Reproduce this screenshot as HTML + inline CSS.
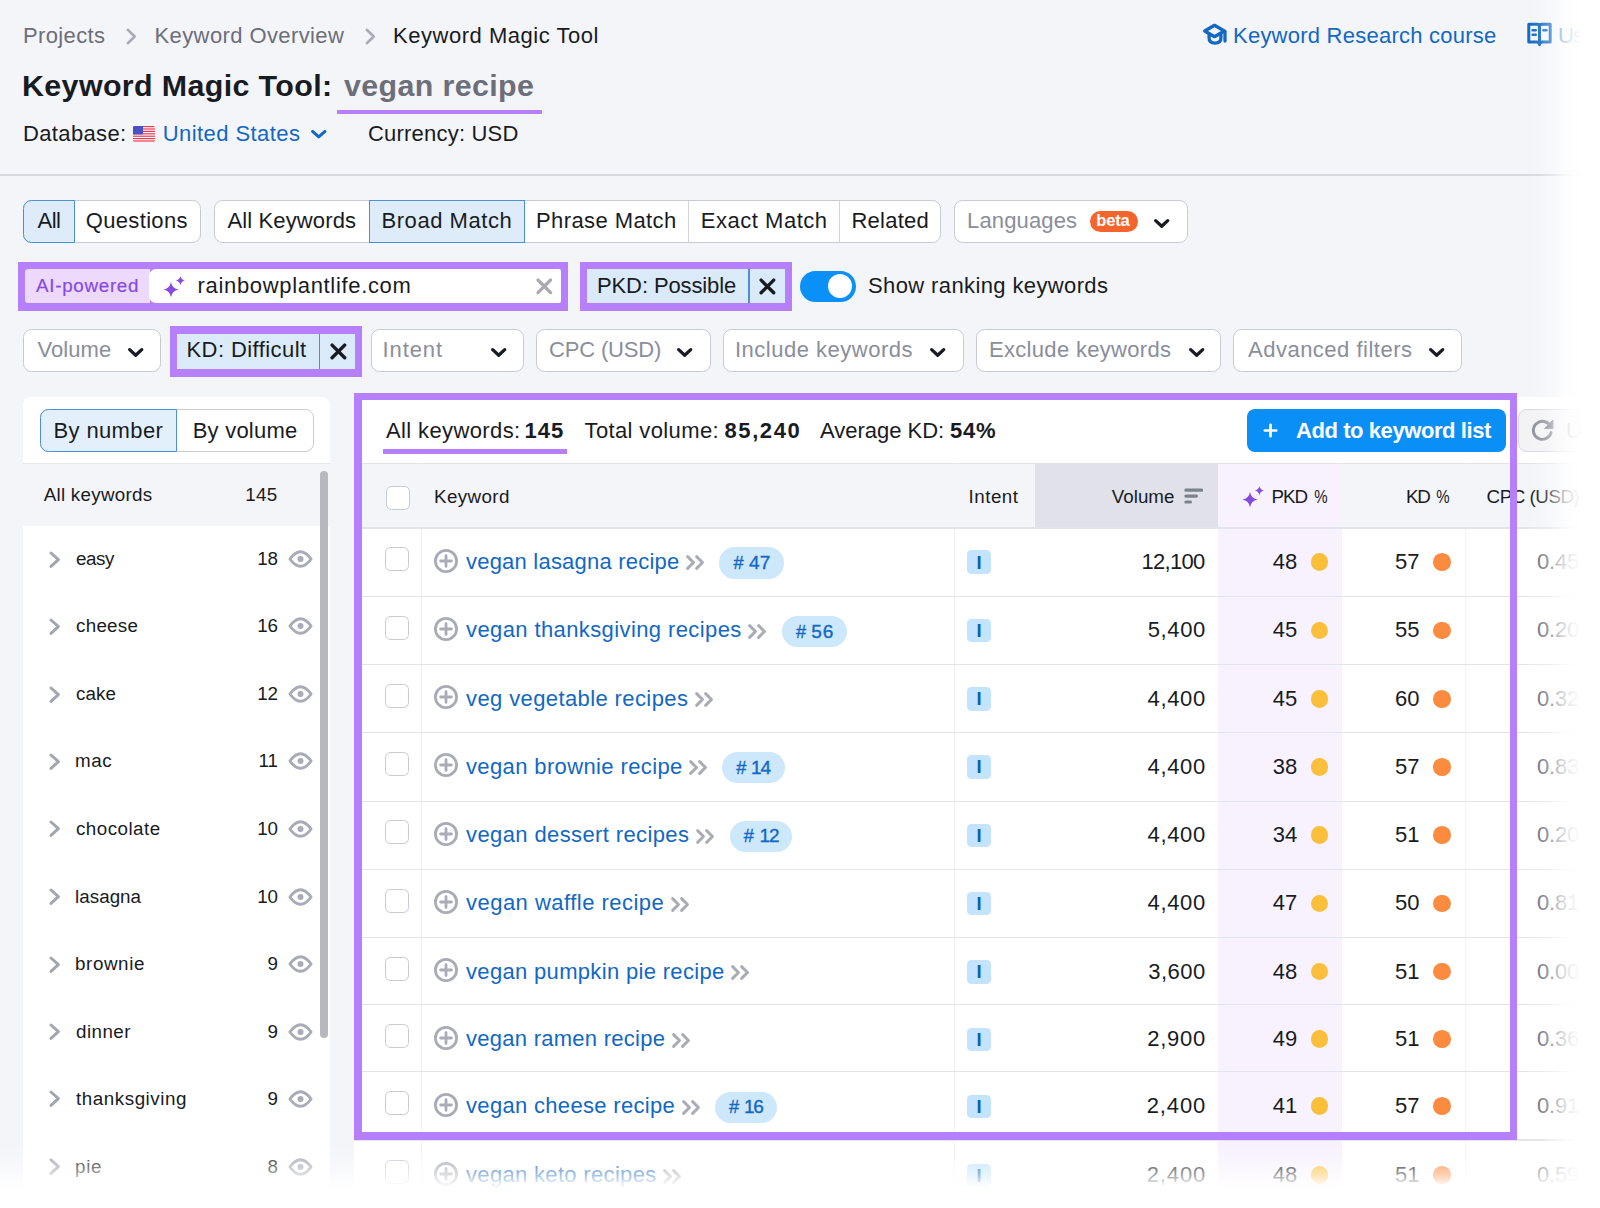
<!DOCTYPE html><html lang="en"><head><meta charset="utf-8"><title>Keyword Magic Tool</title><style>
html,body{margin:0;padding:0;background:#fff}#page{width:1600px;height:1208px;overflow:hidden;position:relative;background:#f4f5f9;font-family:"Liberation Sans", sans-serif;color:#191b23}
.b{position:absolute;display:block}.t{position:absolute;white-space:pre;line-height:30px;height:30px}
</style></head><body><div id="page">
<span class="t" style="left:23.00px;top:20.5px;font-size:22px;color:#6c6e79;letter-spacing:0.361px;">Projects</span>
<svg class="b" style="left:125.44999999999999px;top:26.799999999999997px;" width="12.5" height="19" viewBox="0 0 12.5 19"><path d="M2.8 2.8 L9.7 9.5 L2.8 16.2" fill="none" stroke="#a9abb6" stroke-width="2.6" stroke-linecap="round" stroke-linejoin="round"/></svg>
<span class="t" style="left:154.50px;top:20.5px;font-size:22px;color:#6c6e79;letter-spacing:0.400px;">Keyword Overview</span>
<svg class="b" style="left:364.25px;top:26.799999999999997px;" width="12.5" height="19" viewBox="0 0 12.5 19"><path d="M2.8 2.8 L9.7 9.5 L2.8 16.2" fill="none" stroke="#a9abb6" stroke-width="2.6" stroke-linecap="round" stroke-linejoin="round"/></svg>
<span class="t" style="left:393.00px;top:20.5px;font-size:22px;color:#191b23;letter-spacing:0.531px;">Keyword Magic Tool</span>
<svg class="b" style="left:1202px;top:23.2px;" width="26" height="24" viewBox="0 0 26 24"><path d="M12.5 2.3 L2.7 8 L12.5 13.7 L22.3 8 Z" fill="none" stroke="#1268c3" stroke-width="3.3" stroke-linejoin="round"/><path d="M7.1 11.2 V15 Q7.1 20.1 13 20.1 Q18.9 20.1 18.9 15 V11.2" fill="none" stroke="#1268c3" stroke-width="3.3" stroke-linejoin="round" stroke-linecap="round"/><path d="M23 8.3 V18" stroke="#1268c3" stroke-width="3.3" stroke-linecap="round"/></svg>
<span class="t" style="left:1233.00px;top:20.5px;font-size:22px;color:#1268c3;letter-spacing:0.238px;">Keyword Research course</span>
<svg class="b" style="left:1527px;top:21.7px;" width="26" height="26" viewBox="0 0 26 26"><path d="M1.8 2.2 H10 Q12.5 2.2 12.5 4.4 Q12.5 2.2 15 2.2 H23.2 V20 H15 Q12.5 20 12.5 22.6 Q12.5 20 10 20 H1.8 Z" fill="none" stroke="#1268c3" stroke-width="3" stroke-linejoin="round"/><path d="M12.5 3.5 V22" stroke="#1268c3" stroke-width="3"/><path d="M5.6 8.2 h3.2 M5.6 12.8 h3.2 M16.4 8.2 h3.2" stroke="#1268c3" stroke-width="2.4" stroke-linecap="round"/><path d="M10 21 L12.5 24.6 L15 21 Z" fill="#1268c3"/></svg>
<span class="t" style="left:1558.00px;top:20.5px;font-size:22px;color:#1268c3;letter-spacing:-0.983px;">User manual</span>
<span class="t" style="left:22.00px;top:70.4px;font-size:30.4px;color:#191b23;font-weight:700;letter-spacing:0.376px;">Keyword Magic Tool:</span>
<span class="t" style="left:344.00px;top:70.4px;font-size:30.4px;color:#6c6e79;font-weight:700;letter-spacing:0.371px;">vegan recipe</span>
<div class="b" style="left:337px;top:109.6px;width:205px;height:4.7px;background:#b67ffb;"></div>
<span class="t" style="left:23.00px;top:119.0px;font-size:22px;color:#191b23;letter-spacing:0.353px;">Database:</span>
<svg class="b" style="left:133.3px;top:126.2px;border-radius:1.5px;" width="22" height="15.6" viewBox="0 0 22 15.6"><rect width="22" height="15.6" fill="#fff"/><rect y="0.00" width="22" height="1.2" fill="#e8384f"/><rect y="2.40" width="22" height="1.2" fill="#e8384f"/><rect y="4.80" width="22" height="1.2" fill="#e8384f"/><rect y="7.20" width="22" height="1.2" fill="#e8384f"/><rect y="9.60" width="22" height="1.2" fill="#e8384f"/><rect y="12.00" width="22" height="1.2" fill="#e8384f"/><rect y="14.40" width="22" height="1.2" fill="#e8384f"/><rect width="10" height="8.4" fill="#4a4fc4"/></svg>
<span class="t" style="left:162.70px;top:119.0px;font-size:22px;color:#1268c3;letter-spacing:0.435px;">United States</span>
<svg class="b" style="left:308.95px;top:128.0px;" width="19.5" height="12.8" viewBox="0 0 19.5 12.8"><path d="M3.50 3.50 L9.75 9.00 L16.00 3.50" fill="none" stroke="#1268c3" stroke-width="3" stroke-linecap="round" stroke-linejoin="round"/></svg>
<span class="t" style="left:368.00px;top:119.0px;font-size:22px;color:#191b23;letter-spacing:0.206px;">Currency: USD</span>
<div class="b" style="left:0px;top:174px;width:1600px;height:1.5px;background:#d7d9df;"></div>
<div class="b" style="left:23px;top:200.45px;width:178px;height:42.4px;background:#fff;border:1.5px solid #c8cad2;border-radius:8.5px;box-sizing:border-box;"></div>
<div class="b" style="left:23px;top:200.45px;width:52px;height:42.4px;background:#deebf8;border:1.5px solid #4a90d6;border-radius:8.5px 0 0 8.5px;box-sizing:border-box;"></div>
<span class="t" style="left:37.50px;top:206.1px;font-size:22px;color:#191b23;letter-spacing:-0.531px;">All</span>
<span class="t" style="left:85.80px;top:206.1px;font-size:22px;color:#191b23;letter-spacing:0.331px;">Questions</span>
<div class="b" style="left:214px;top:200.45px;width:727px;height:42.4px;background:#fff;border:1.5px solid #c8cad2;border-radius:8.5px;box-sizing:border-box;"></div>
<span class="t" style="left:227.50px;top:206.1px;font-size:22px;color:#191b23;letter-spacing:0.122px;">All Keywords</span>
<div class="b" style="left:369px;top:200.45px;width:156px;height:42.4px;background:#deebf8;border:1.5px solid #4a90d6;border-radius:0;box-sizing:border-box;"></div>
<span class="t" style="left:381.50px;top:206.1px;font-size:22px;color:#191b23;letter-spacing:0.551px;">Broad Match</span>
<div class="b" style="left:687.5px;top:201.45px;width:1.2px;height:40.4px;background:#d3d5dc;"></div>
<span class="t" style="left:536.00px;top:206.1px;font-size:22px;color:#191b23;letter-spacing:0.410px;">Phrase Match</span>
<div class="b" style="left:838.5px;top:201.45px;width:1.2px;height:40.4px;background:#d3d5dc;"></div>
<span class="t" style="left:700.80px;top:206.1px;font-size:22px;color:#191b23;letter-spacing:0.519px;">Exact Match</span>
<span class="t" style="left:851.50px;top:206.1px;font-size:22px;color:#191b23;letter-spacing:0.234px;">Related</span>
<div class="b" style="left:954px;top:200.45px;width:233.5px;height:42.4px;background:#fff;border:1.5px solid #c8cad2;border-radius:8.5px;box-sizing:border-box;"></div>
<span class="t" style="left:967.00px;top:205.9px;font-size:22px;color:#8a8e9b;letter-spacing:0.140px;">Languages</span>
<svg class="b" style="left:1152.3px;top:216.54999999999998px;" width="19.4" height="13.2" viewBox="0 0 19.4 13.2"><path d="M3.65 3.65 L9.70 9.22 L15.75 3.65" fill="none" stroke="#191b23" stroke-width="3.3" stroke-linecap="round" stroke-linejoin="round"/></svg>
<div class="b" style="left:1090px;top:210.7px;width:47.5px;height:21.2px;background:#f5642d;border-radius:10.6px;"></div>
<span class="t" style="left:1096.20px;top:206.1px;font-size:16.6px;color:#fff;font-weight:700;letter-spacing:-0.197px;">beta</span>
<div class="b" style="left:18px;top:262px;width:550.2px;height:48.5px;background:#b67ffb;"></div>
<div class="b" style="left:25px;top:268.7px;width:124.5px;height:34.6px;background:#ecd9fc;border-radius:3px 0 0 3px;"></div>
<span class="t" style="left:36.00px;top:270.8px;font-size:18.8px;color:#8649e1;letter-spacing:0.711px;-webkit-text-stroke:0.2px #8649e1;">AI-powered</span>
<div class="b" style="left:149px;top:268.7px;width:412.3px;height:34.6px;background:#fff;border-radius:7px 2px 2px 7px;"></div>
<svg class="b" style="left:162.6px;top:275.5px;" width="23.0" height="22.0" viewBox="0 0 23 22"><path d="M8 6.0 Q9.14 12.459999999999999 15.6 13.6 Q9.14 14.74 8 21.2 Q6.86 14.74 0.40000000000000036 13.6 Q6.86 12.459999999999999 8 6.0 Z M17.4 0.0 Q18.182 3.8179999999999996 22.0 4.6 Q18.182 5.382 17.4 9.2 Q16.618 5.382 12.799999999999999 4.6 Q16.618 3.8179999999999996 17.4 0.0 Z" fill="#8649e1"/></svg>
<span class="t" style="left:197.50px;top:271.0px;font-size:22px;color:#191b23;letter-spacing:0.673px;">rainbowplantlife.com</span>
<svg class="b" style="left:534.7px;top:277.2px;" width="18.6" height="18.6" viewBox="0 0 18.6 18.6"><path d="M3.0 3.0 L15.600000000000001 15.600000000000001 M15.600000000000001 3.0 L3.0 15.600000000000001" fill="none" stroke="#a8a9b1" stroke-width="3.2" stroke-linecap="round"/></svg>
<div class="b" style="left:580px;top:262px;width:212px;height:48.5px;background:#b67ffb;"></div>
<div class="b" style="left:587px;top:268.7px;width:198px;height:34.6px;background:#dbeaf8;"></div>
<div class="b" style="left:748.3px;top:268.7px;width:1.4px;height:34.6px;background:#4a90d6;"></div>
<span class="t" style="left:597.00px;top:271.0px;font-size:22px;color:#191b23;letter-spacing:-0.115px;">PKD: Possible</span>
<svg class="b" style="left:758.3000000000001px;top:277.1px;" width="18.8" height="18.8" viewBox="0 0 18.8 18.8"><path d="M3.1 3.1 L15.700000000000001 15.700000000000001 M15.700000000000001 3.1 L3.1 15.700000000000001" fill="none" stroke="#191b23" stroke-width="3.4" stroke-linecap="round"/></svg>
<div class="b" style="left:800px;top:271.2px;width:55.6px;height:30.8px;background:#0a90f6;border-radius:15.4px;"></div>
<div class="b" style="left:827.9px;top:273.9px;width:24.6px;height:24.6px;background:#fff;border-radius:12.3px;"></div>
<span class="t" style="left:868.00px;top:271.0px;font-size:22px;color:#191b23;letter-spacing:0.383px;">Show ranking keywords</span>
<div class="b" style="left:23px;top:329.1px;width:138px;height:43.2px;background:#fff;border:1.5px solid #c8cad2;border-radius:8.5px;box-sizing:border-box;"></div>
<span class="t" style="left:37.50px;top:335.0px;font-size:22px;color:#8a8e9b;letter-spacing:0.071px;">Volume</span>
<svg class="b" style="left:125.8px;top:345.6px;" width="19.4" height="13.2" viewBox="0 0 19.4 13.2"><path d="M3.65 3.65 L9.70 9.22 L15.75 3.65" fill="none" stroke="#191b23" stroke-width="3.3" stroke-linecap="round" stroke-linejoin="round"/></svg>
<div class="b" style="left:169.5px;top:326px;width:192.5px;height:50.5px;background:#b67ffb;"></div>
<div class="b" style="left:176.5px;top:333.6px;width:178px;height:35.2px;background:#dbeaf8;"></div>
<div class="b" style="left:318.5px;top:333.6px;width:1.4px;height:35.2px;background:#4a90d6;"></div>
<span class="t" style="left:186.50px;top:335.0px;font-size:22px;color:#191b23;letter-spacing:0.425px;">KD: Difficult</span>
<svg class="b" style="left:329.1px;top:341.6px;" width="18.8" height="18.8" viewBox="0 0 18.8 18.8"><path d="M3.1 3.1 L15.700000000000001 15.700000000000001 M15.700000000000001 3.1 L3.1 15.700000000000001" fill="none" stroke="#191b23" stroke-width="3.4" stroke-linecap="round"/></svg>
<div class="b" style="left:371px;top:329.1px;width:153px;height:43.2px;background:#fff;border:1.5px solid #c8cad2;border-radius:8.5px;box-sizing:border-box;"></div>
<span class="t" style="left:382.50px;top:335.0px;font-size:22px;color:#8a8e9b;letter-spacing:0.914px;">Intent</span>
<svg class="b" style="left:488.8px;top:345.6px;" width="19.4" height="13.2" viewBox="0 0 19.4 13.2"><path d="M3.65 3.65 L9.70 9.22 L15.75 3.65" fill="none" stroke="#191b23" stroke-width="3.3" stroke-linecap="round" stroke-linejoin="round"/></svg>
<div class="b" style="left:536px;top:329.1px;width:175px;height:43.2px;background:#fff;border:1.5px solid #c8cad2;border-radius:8.5px;box-sizing:border-box;"></div>
<span class="t" style="left:549.00px;top:335.0px;font-size:22px;color:#8a8e9b;letter-spacing:-0.167px;">CPC (USD)</span>
<svg class="b" style="left:675.3px;top:345.6px;" width="19.4" height="13.2" viewBox="0 0 19.4 13.2"><path d="M3.65 3.65 L9.70 9.22 L15.75 3.65" fill="none" stroke="#191b23" stroke-width="3.3" stroke-linecap="round" stroke-linejoin="round"/></svg>
<div class="b" style="left:723px;top:329.1px;width:241px;height:43.2px;background:#fff;border:1.5px solid #c8cad2;border-radius:8.5px;box-sizing:border-box;"></div>
<span class="t" style="left:735.00px;top:335.0px;font-size:22px;color:#8a8e9b;letter-spacing:0.502px;">Include keywords</span>
<svg class="b" style="left:928.3px;top:345.6px;" width="19.4" height="13.2" viewBox="0 0 19.4 13.2"><path d="M3.65 3.65 L9.70 9.22 L15.75 3.65" fill="none" stroke="#191b23" stroke-width="3.3" stroke-linecap="round" stroke-linejoin="round"/></svg>
<div class="b" style="left:976px;top:329.1px;width:245px;height:43.2px;background:#fff;border:1.5px solid #c8cad2;border-radius:8.5px;box-sizing:border-box;"></div>
<span class="t" style="left:989.00px;top:335.0px;font-size:22px;color:#8a8e9b;letter-spacing:0.313px;">Exclude keywords</span>
<svg class="b" style="left:1186.8px;top:345.6px;" width="19.4" height="13.2" viewBox="0 0 19.4 13.2"><path d="M3.65 3.65 L9.70 9.22 L15.75 3.65" fill="none" stroke="#191b23" stroke-width="3.3" stroke-linecap="round" stroke-linejoin="round"/></svg>
<div class="b" style="left:1233px;top:329.1px;width:229px;height:43.2px;background:#fff;border:1.5px solid #c8cad2;border-radius:8.5px;box-sizing:border-box;"></div>
<span class="t" style="left:1248.00px;top:335.0px;font-size:22px;color:#8a8e9b;letter-spacing:0.498px;">Advanced filters</span>
<svg class="b" style="left:1427.3px;top:345.6px;" width="19.4" height="13.2" viewBox="0 0 19.4 13.2"><path d="M3.65 3.65 L9.70 9.22 L15.75 3.65" fill="none" stroke="#191b23" stroke-width="3.3" stroke-linecap="round" stroke-linejoin="round"/></svg>
<div class="b" style="left:23px;top:397px;width:307px;height:900px;background:#fff;border-radius:8px 8px 0 0;"></div>
<div class="b" style="left:40px;top:408.7px;width:274px;height:43.2px;background:#fff;border:1.5px solid #c8cad2;border-radius:8.5px;box-sizing:border-box;"></div>
<div class="b" style="left:40px;top:408.7px;width:137.3px;height:43.2px;background:#e3f0fc;border:1.5px solid #4a90d6;border-radius:8.5px 0 0 8.5px;box-sizing:border-box;"></div>
<span class="t" style="left:53.50px;top:415.7px;font-size:22px;color:#191b23;letter-spacing:0.368px;">By number</span>
<span class="t" style="left:192.70px;top:415.7px;font-size:22px;color:#191b23;letter-spacing:0.229px;">By volume</span>
<div class="b" style="left:23px;top:463px;width:307px;height:62.5px;background:#f4f5f9;"></div>
<div class="b" style="left:23px;top:462.5px;width:307px;height:1.2px;background:#e6e7ec;"></div>
<span class="t" style="left:43.70px;top:479.7px;font-size:18.8px;color:#191b23;letter-spacing:0.270px;">All keywords</span>
<span class="t" style="left:245.30px;top:479.7px;font-size:18.8px;color:#191b23;letter-spacing:0.305px;">145</span>
<div class="b" style="left:320px;top:470.5px;width:8.2px;height:567px;background:#b7b8be;border-radius:4.1px;"></div>
<svg class="b" style="left:48.0px;top:549.8px;" width="13.4" height="19.4" viewBox="0 0 13.4 19.4"><path d="M3.0 3.0 L10.4 9.7 L3.0 16.4" fill="none" stroke="#a3a5b0" stroke-width="3" stroke-linecap="round" stroke-linejoin="round"/></svg>
<span class="t" style="left:76.00px;top:544.2px;font-size:18.8px;color:#191b23;letter-spacing:-0.427px;">easy</span>
<span class="t" style="left:257.15px;top:544.2px;font-size:18.8px;color:#191b23;">18</span>
<svg class="b" style="left:287px;top:548.2px;" width="27" height="22" viewBox="0 0 27 22"><path d="M2.9 11 Q13.5 -3.6 24.1 11 Q13.5 25.6 2.9 11 Z" fill="none" stroke="#a9abb6" stroke-width="2.9" stroke-linejoin="round"/><circle cx="13.5" cy="11" r="3" fill="#a9abb6"/></svg>
<svg class="b" style="left:48.0px;top:616.5px;" width="13.4" height="19.4" viewBox="0 0 13.4 19.4"><path d="M3.0 3.0 L10.4 9.7 L3.0 16.4" fill="none" stroke="#a3a5b0" stroke-width="3" stroke-linecap="round" stroke-linejoin="round"/></svg>
<span class="t" style="left:76.00px;top:610.9px;font-size:18.8px;color:#191b23;letter-spacing:0.277px;">cheese</span>
<span class="t" style="left:257.15px;top:610.9px;font-size:18.8px;color:#191b23;">16</span>
<svg class="b" style="left:287px;top:614.9000000000001px;" width="27" height="22" viewBox="0 0 27 22"><path d="M2.9 11 Q13.5 -3.6 24.1 11 Q13.5 25.6 2.9 11 Z" fill="none" stroke="#a9abb6" stroke-width="2.9" stroke-linejoin="round"/><circle cx="13.5" cy="11" r="3" fill="#a9abb6"/></svg>
<svg class="b" style="left:48.0px;top:684.5px;" width="13.4" height="19.4" viewBox="0 0 13.4 19.4"><path d="M3.0 3.0 L10.4 9.7 L3.0 16.4" fill="none" stroke="#a3a5b0" stroke-width="3" stroke-linecap="round" stroke-linejoin="round"/></svg>
<span class="t" style="left:76.00px;top:678.9px;font-size:18.8px;color:#191b23;letter-spacing:0.058px;">cake</span>
<span class="t" style="left:257.15px;top:678.9px;font-size:18.8px;color:#191b23;">12</span>
<svg class="b" style="left:287px;top:682.9000000000001px;" width="27" height="22" viewBox="0 0 27 22"><path d="M2.9 11 Q13.5 -3.6 24.1 11 Q13.5 25.6 2.9 11 Z" fill="none" stroke="#a9abb6" stroke-width="2.9" stroke-linejoin="round"/><circle cx="13.5" cy="11" r="3" fill="#a9abb6"/></svg>
<svg class="b" style="left:48.0px;top:751.5999999999999px;" width="13.4" height="19.4" viewBox="0 0 13.4 19.4"><path d="M3.0 3.0 L10.4 9.7 L3.0 16.4" fill="none" stroke="#a3a5b0" stroke-width="3" stroke-linecap="round" stroke-linejoin="round"/></svg>
<span class="t" style="left:75.00px;top:746.0px;font-size:18.8px;color:#191b23;letter-spacing:0.555px;">mac</span>
<span class="t" style="left:258.55px;top:746.0px;font-size:18.8px;color:#191b23;">11</span>
<svg class="b" style="left:287px;top:750.0px;" width="27" height="22" viewBox="0 0 27 22"><path d="M2.9 11 Q13.5 -3.6 24.1 11 Q13.5 25.6 2.9 11 Z" fill="none" stroke="#a9abb6" stroke-width="2.9" stroke-linejoin="round"/><circle cx="13.5" cy="11" r="3" fill="#a9abb6"/></svg>
<svg class="b" style="left:48.0px;top:819.4px;" width="13.4" height="19.4" viewBox="0 0 13.4 19.4"><path d="M3.0 3.0 L10.4 9.7 L3.0 16.4" fill="none" stroke="#a3a5b0" stroke-width="3" stroke-linecap="round" stroke-linejoin="round"/></svg>
<span class="t" style="left:76.00px;top:813.8px;font-size:18.8px;color:#191b23;letter-spacing:0.468px;">chocolate</span>
<span class="t" style="left:257.15px;top:813.8px;font-size:18.8px;color:#191b23;">10</span>
<svg class="b" style="left:287px;top:817.8000000000001px;" width="27" height="22" viewBox="0 0 27 22"><path d="M2.9 11 Q13.5 -3.6 24.1 11 Q13.5 25.6 2.9 11 Z" fill="none" stroke="#a9abb6" stroke-width="2.9" stroke-linejoin="round"/><circle cx="13.5" cy="11" r="3" fill="#a9abb6"/></svg>
<svg class="b" style="left:48.0px;top:887.4px;" width="13.4" height="19.4" viewBox="0 0 13.4 19.4"><path d="M3.0 3.0 L10.4 9.7 L3.0 16.4" fill="none" stroke="#a3a5b0" stroke-width="3" stroke-linecap="round" stroke-linejoin="round"/></svg>
<span class="t" style="left:75.00px;top:881.8px;font-size:18.8px;color:#191b23;letter-spacing:0.043px;">lasagna</span>
<span class="t" style="left:257.15px;top:881.8px;font-size:18.8px;color:#191b23;">10</span>
<svg class="b" style="left:287px;top:885.8000000000001px;" width="27" height="22" viewBox="0 0 27 22"><path d="M2.9 11 Q13.5 -3.6 24.1 11 Q13.5 25.6 2.9 11 Z" fill="none" stroke="#a9abb6" stroke-width="2.9" stroke-linejoin="round"/><circle cx="13.5" cy="11" r="3" fill="#a9abb6"/></svg>
<svg class="b" style="left:48.0px;top:954.6999999999999px;" width="13.4" height="19.4" viewBox="0 0 13.4 19.4"><path d="M3.0 3.0 L10.4 9.7 L3.0 16.4" fill="none" stroke="#a3a5b0" stroke-width="3" stroke-linecap="round" stroke-linejoin="round"/></svg>
<span class="t" style="left:75.00px;top:949.1px;font-size:18.8px;color:#191b23;letter-spacing:0.596px;">brownie</span>
<span class="t" style="left:267.60px;top:949.1px;font-size:18.8px;color:#191b23;">9</span>
<svg class="b" style="left:287px;top:953.1px;" width="27" height="22" viewBox="0 0 27 22"><path d="M2.9 11 Q13.5 -3.6 24.1 11 Q13.5 25.6 2.9 11 Z" fill="none" stroke="#a9abb6" stroke-width="2.9" stroke-linejoin="round"/><circle cx="13.5" cy="11" r="3" fill="#a9abb6"/></svg>
<svg class="b" style="left:48.0px;top:1022.0999999999999px;" width="13.4" height="19.4" viewBox="0 0 13.4 19.4"><path d="M3.0 3.0 L10.4 9.7 L3.0 16.4" fill="none" stroke="#a3a5b0" stroke-width="3" stroke-linecap="round" stroke-linejoin="round"/></svg>
<span class="t" style="left:76.00px;top:1016.5px;font-size:18.8px;color:#191b23;letter-spacing:0.449px;">dinner</span>
<span class="t" style="left:267.60px;top:1016.5px;font-size:18.8px;color:#191b23;">9</span>
<svg class="b" style="left:287px;top:1020.5px;" width="27" height="22" viewBox="0 0 27 22"><path d="M2.9 11 Q13.5 -3.6 24.1 11 Q13.5 25.6 2.9 11 Z" fill="none" stroke="#a9abb6" stroke-width="2.9" stroke-linejoin="round"/><circle cx="13.5" cy="11" r="3" fill="#a9abb6"/></svg>
<svg class="b" style="left:48.0px;top:1089.2px;" width="13.4" height="19.4" viewBox="0 0 13.4 19.4"><path d="M3.0 3.0 L10.4 9.7 L3.0 16.4" fill="none" stroke="#a3a5b0" stroke-width="3" stroke-linecap="round" stroke-linejoin="round"/></svg>
<span class="t" style="left:76.00px;top:1083.6px;font-size:18.8px;color:#191b23;letter-spacing:0.549px;">thanksgiving</span>
<span class="t" style="left:267.60px;top:1083.6px;font-size:18.8px;color:#191b23;">9</span>
<svg class="b" style="left:287px;top:1087.6000000000001px;" width="27" height="22" viewBox="0 0 27 22"><path d="M2.9 11 Q13.5 -3.6 24.1 11 Q13.5 25.6 2.9 11 Z" fill="none" stroke="#a9abb6" stroke-width="2.9" stroke-linejoin="round"/><circle cx="13.5" cy="11" r="3" fill="#a9abb6"/></svg>
<svg class="b" style="left:48.0px;top:1157.3px;" width="13.4" height="19.4" viewBox="0 0 13.4 19.4"><path d="M3.0 3.0 L10.4 9.7 L3.0 16.4" fill="none" stroke="#a3a5b0" stroke-width="3" stroke-linecap="round" stroke-linejoin="round"/></svg>
<span class="t" style="left:75.00px;top:1151.7px;font-size:18.8px;color:#191b23;letter-spacing:0.691px;">pie</span>
<span class="t" style="left:267.60px;top:1151.7px;font-size:18.8px;color:#191b23;">8</span>
<svg class="b" style="left:287px;top:1155.7px;" width="27" height="22" viewBox="0 0 27 22"><path d="M2.9 11 Q13.5 -3.6 24.1 11 Q13.5 25.6 2.9 11 Z" fill="none" stroke="#a9abb6" stroke-width="2.9" stroke-linejoin="round"/><circle cx="13.5" cy="11" r="3" fill="#a9abb6"/></svg>
<div class="b" style="left:354px;top:397px;width:1300px;height:900px;background:#fff;"></div>
<div class="b" style="left:354px;top:463px;width:1300px;height:65px;background:#f4f5f9;"></div>
<div class="b" style="left:1034.5px;top:463px;width:183.5px;height:65px;background:#e0e1e9;"></div>
<div class="b" style="left:1218px;top:463px;width:123px;height:800px;background:#f8f2ff;"></div>
<div class="b" style="left:354px;top:462.5px;width:1300px;height:1.3px;background:#e2e3e9;"></div>
<div class="b" style="left:420.5px;top:463px;width:1px;height:800px;background:#f3f4f7;"></div>
<div class="b" style="left:954.0px;top:463px;width:1px;height:800px;background:#f3f4f7;"></div>
<div class="b" style="left:1340.5px;top:463px;width:1px;height:800px;background:#f3f4f7;"></div>
<div class="b" style="left:1464.5px;top:463px;width:1px;height:800px;background:#f3f4f7;"></div>
<span class="t" style="left:386.00px;top:415.5px;font-size:22px;color:#191b23;letter-spacing:0.377px;">All keywords: </span>
<span class="t" style="left:524.50px;top:415.5px;font-size:22px;color:#191b23;font-weight:700;letter-spacing:1.015px;">145</span>
<div class="b" style="left:382.5px;top:449px;width:184.5px;height:4.5px;background:#b67ffb;"></div>
<span class="t" style="left:584.50px;top:415.5px;font-size:22px;color:#191b23;letter-spacing:0.375px;">Total volume: </span>
<span class="t" style="left:724.50px;top:415.5px;font-size:22px;color:#191b23;font-weight:700;letter-spacing:1.589px;">85,240</span>
<span class="t" style="left:820.00px;top:415.5px;font-size:22px;color:#191b23;letter-spacing:-0.022px;">Average KD: </span>
<span class="t" style="left:950.00px;top:415.5px;font-size:22px;color:#191b23;font-weight:700;letter-spacing:0.765px;">54%</span>
<div class="b" style="left:1246.7px;top:409px;width:259px;height:42.5px;background:#0a8ff6;border-radius:8px;"></div>
<svg class="b" style="left:1262.1px;top:422.1px;" width="17" height="17" viewBox="0 0 17 17"><path d="M8.5 2.8 V14.2 M2.8 8.5 H14.2" stroke="#fff" stroke-width="2.7" stroke-linecap="round"/></svg>
<span class="t" style="left:1296.00px;top:415.5px;font-size:22px;color:#fff;font-weight:700;letter-spacing:-0.421px;">Add to keyword list</span>
<div class="b" style="left:1518.3px;top:409px;width:120px;height:42.8px;background:#f3f3f6;border:1.5px solid #d6d8dd;border-radius:8.5px;box-sizing:border-box;"></div>
<svg class="b" style="left:1530px;top:418px;" width="26" height="26" viewBox="0 0 26 26"><path d="M20.6 8.6 A9 9 0 1 0 21.1 14.6" fill="none" stroke="#8c8e98" stroke-width="2.9" stroke-linecap="round"/><path d="M14.5 10.5 L23 2 V10.6 Z" fill="#8c8e98" stroke="#8c8e98" stroke-width="0.8" stroke-linejoin="round"/></svg>
<span class="t" style="left:1566.00px;top:415.5px;font-size:22px;color:#8a8e9b;letter-spacing:-0.741px;">Update</span>
<div class="b" style="left:385.5px;top:486px;width:24px;height:24px;background:#fff;border:1.5px solid #c8cad2;border-radius:5.5px;box-sizing:border-box;"></div>
<span class="t" style="left:434.00px;top:481.7px;font-size:18.8px;color:#191b23;letter-spacing:0.396px;">Keyword</span>
<span class="t" style="left:968.50px;top:481.7px;font-size:18.8px;color:#191b23;letter-spacing:0.506px;">Intent</span>
<span class="t" style="left:1111.80px;top:481.7px;font-size:18.8px;color:#191b23;">Volume</span>
<svg class="b" style="left:1183.6px;top:487.6px;" width="20" height="17" viewBox="0 0 20 17"><path d="M1.9 2.2 H17.6 M1.9 8.1 H12.4 M1.9 14 H6.4" stroke="#7a8389" stroke-width="3.2" stroke-linecap="round"/></svg>
<svg class="b" style="left:1242.2px;top:485.7px;" width="23.0" height="22.0" viewBox="0 0 23 22"><path d="M8 6.0 Q9.14 12.459999999999999 15.6 13.6 Q9.14 14.74 8 21.2 Q6.86 14.74 0.40000000000000036 13.6 Q6.86 12.459999999999999 8 6.0 Z M17.4 0.0 Q18.182 3.8179999999999996 22.0 4.6 Q18.182 5.382 17.4 9.2 Q16.618 5.382 12.799999999999999 4.6 Q16.618 3.8179999999999996 17.4 0.0 Z" fill="#8649e1"/></svg>
<span class="t" style="left:1271.50px;top:481.7px;font-size:18.8px;color:#191b23;letter-spacing:-1.027px;">PKD</span>
<span class="t" style="left:1310.60px;top:481.7px;font-size:18.8px;color:#191b23;transform:scaleX(0.8);transform-origin:right center;">%</span>
<span class="t" style="left:1406.00px;top:481.7px;font-size:18.8px;color:#191b23;letter-spacing:-1.200px;">KD</span>
<span class="t" style="left:1433.20px;top:481.7px;font-size:18.8px;color:#191b23;transform:scaleX(0.8);transform-origin:right center;">%</span>
<span class="t" style="left:1486.60px;top:481.7px;font-size:18.8px;color:#191b23;letter-spacing:-0.472px;">CPC (USD)</span>
<div class="b" style="left:354px;top:527.4px;width:1300px;height:1.3px;background:#e4e5eb;"></div>
<div class="b" style="left:385.4px;top:547.1999999999999px;width:24px;height:24px;background:#fff;border:1.5px solid #c8cad2;border-radius:5.5px;box-sizing:border-box;"></div>
<svg class="b" style="left:433px;top:547.5px;" width="26" height="26" viewBox="0 0 26 26"><circle cx="13" cy="13" r="10.6" fill="none" stroke="#a9abb6" stroke-width="2.8"/><path d="M13 7.6 V18.4 M7.6 13 H18.4" stroke="#a9abb6" stroke-width="2.8" stroke-linecap="round"/></svg>
<span class="t" style="left:466.00px;top:547.0px;font-size:22px;color:#1268c3;letter-spacing:0.215px;">vegan lasagna recipe</span>
<svg class="b" style="left:684px;top:553.3px;" width="23" height="19" viewBox="0 0 23 19"><path d="M3.6 3.6 L9.5 9.5 L3.6 15.4 M12.6 3.6 L18.5 9.5 L12.6 15.4" fill="none" stroke="#a9abb6" stroke-width="2.9" stroke-linecap="round" stroke-linejoin="round"/></svg>
<div class="b" style="left:719.4px;top:547.4px;width:64.6px;height:31.3px;background:#cde7fb;border-radius:15.7px;"></div>
<span class="t" style="left:733.50px;top:548.2px;font-size:18.2px;color:#1268c3;-webkit-text-stroke:0.35px #1268c3;">#</span>
<span class="t" style="left:749.05px;top:548.2px;font-size:19px;color:#1268c3;letter-spacing:0.183px;-webkit-text-stroke:0.35px #1268c3;">47</span>
<div class="b" style="left:966.9px;top:550.3499999999999px;width:24.1px;height:23.7px;background:#c4e4fd;border-radius:4.5px;"></div>
<span class="t" style="left:976.50px;top:547.5px;font-size:18.4px;color:#0b5fb3;font-weight:700;">I</span>
<span class="t" style="left:1141.50px;top:547.0px;font-size:22px;color:#191b23;letter-spacing:-0.711px;">12,100</span>
<span class="t" style="left:1272.76px;top:547.0px;font-size:22px;color:#191b23;">48</span>
<div class="b" style="left:1310.7px;top:553.1999999999999px;width:17.6px;height:17.6px;background:#fcbf3c;border-radius:8.8px;"></div>
<span class="t" style="left:1395.06px;top:547.0px;font-size:22px;color:#191b23;">57</span>
<div class="b" style="left:1433.3px;top:553.1999999999999px;width:17.6px;height:17.6px;background:#fb8b3e;border-radius:8.8px;"></div>
<span class="t" style="left:1537.00px;top:547.0px;font-size:22px;color:#6c6e79;letter-spacing:-0.194px;">0.45</span>
<div class="b" style="left:354px;top:595.8px;width:1300px;height:1.3px;background:#e4e5eb;"></div>
<div class="b" style="left:385.4px;top:615.6px;width:24px;height:24px;background:#fff;border:1.5px solid #c8cad2;border-radius:5.5px;box-sizing:border-box;"></div>
<svg class="b" style="left:433px;top:615.9000000000001px;" width="26" height="26" viewBox="0 0 26 26"><circle cx="13" cy="13" r="10.6" fill="none" stroke="#a9abb6" stroke-width="2.8"/><path d="M13 7.6 V18.4 M7.6 13 H18.4" stroke="#a9abb6" stroke-width="2.8" stroke-linecap="round"/></svg>
<span class="t" style="left:466.00px;top:615.4px;font-size:22px;color:#1268c3;letter-spacing:0.395px;">vegan thanksgiving recipes</span>
<svg class="b" style="left:746.25px;top:621.7px;" width="23" height="19" viewBox="0 0 23 19"><path d="M3.6 3.6 L9.5 9.5 L3.6 15.4 M12.6 3.6 L18.5 9.5 L12.6 15.4" fill="none" stroke="#a9abb6" stroke-width="2.9" stroke-linecap="round" stroke-linejoin="round"/></svg>
<div class="b" style="left:781.9px;top:615.8000000000001px;width:65px;height:31.3px;background:#cde7fb;border-radius:15.7px;"></div>
<span class="t" style="left:796.00px;top:616.6px;font-size:18.2px;color:#1268c3;-webkit-text-stroke:0.35px #1268c3;">#</span>
<span class="t" style="left:811.20px;top:616.6px;font-size:19px;color:#1268c3;letter-spacing:0.933px;-webkit-text-stroke:0.35px #1268c3;">56</span>
<div class="b" style="left:966.9px;top:618.75px;width:24.1px;height:23.7px;background:#c4e4fd;border-radius:4.5px;"></div>
<span class="t" style="left:976.50px;top:616.0px;font-size:18.4px;color:#0b5fb3;font-weight:700;">I</span>
<span class="t" style="left:1147.70px;top:615.4px;font-size:22px;color:#191b23;letter-spacing:0.620px;">5,400</span>
<span class="t" style="left:1272.76px;top:615.4px;font-size:22px;color:#191b23;">45</span>
<div class="b" style="left:1310.7px;top:621.6px;width:17.6px;height:17.6px;background:#fcbf3c;border-radius:8.8px;"></div>
<span class="t" style="left:1395.06px;top:615.4px;font-size:22px;color:#191b23;">55</span>
<div class="b" style="left:1433.3px;top:621.6px;width:17.6px;height:17.6px;background:#fb8b3e;border-radius:8.8px;"></div>
<span class="t" style="left:1537.00px;top:615.4px;font-size:22px;color:#6c6e79;letter-spacing:-0.194px;">0.20</span>
<div class="b" style="left:354px;top:663.6999999999999px;width:1300px;height:1.3px;background:#e4e5eb;"></div>
<div class="b" style="left:385.4px;top:684.0px;width:24px;height:24px;background:#fff;border:1.5px solid #c8cad2;border-radius:5.5px;box-sizing:border-box;"></div>
<svg class="b" style="left:433px;top:684.3000000000001px;" width="26" height="26" viewBox="0 0 26 26"><circle cx="13" cy="13" r="10.6" fill="none" stroke="#a9abb6" stroke-width="2.8"/><path d="M13 7.6 V18.4 M7.6 13 H18.4" stroke="#a9abb6" stroke-width="2.8" stroke-linecap="round"/></svg>
<span class="t" style="left:466.00px;top:683.8px;font-size:22px;color:#1268c3;letter-spacing:0.394px;">veg vegetable recipes</span>
<svg class="b" style="left:692.9px;top:690.1px;" width="23" height="19" viewBox="0 0 23 19"><path d="M3.6 3.6 L9.5 9.5 L3.6 15.4 M12.6 3.6 L18.5 9.5 L12.6 15.4" fill="none" stroke="#a9abb6" stroke-width="2.9" stroke-linecap="round" stroke-linejoin="round"/></svg>
<div class="b" style="left:966.9px;top:687.15px;width:24.1px;height:23.7px;background:#c4e4fd;border-radius:4.5px;"></div>
<span class="t" style="left:976.50px;top:684.4px;font-size:18.4px;color:#0b5fb3;font-weight:700;">I</span>
<span class="t" style="left:1147.50px;top:683.8px;font-size:22px;color:#191b23;letter-spacing:0.670px;">4,400</span>
<span class="t" style="left:1272.76px;top:683.8px;font-size:22px;color:#191b23;">45</span>
<div class="b" style="left:1310.7px;top:690.0px;width:17.6px;height:17.6px;background:#fcbf3c;border-radius:8.8px;"></div>
<span class="t" style="left:1395.06px;top:683.8px;font-size:22px;color:#191b23;">60</span>
<div class="b" style="left:1433.3px;top:690.0px;width:17.6px;height:17.6px;background:#fb8b3e;border-radius:8.8px;"></div>
<span class="t" style="left:1537.00px;top:683.8px;font-size:22px;color:#6c6e79;letter-spacing:-0.194px;">0.32</span>
<div class="b" style="left:354px;top:732.0px;width:1300px;height:1.3px;background:#e4e5eb;"></div>
<div class="b" style="left:385.4px;top:752.0px;width:24px;height:24px;background:#fff;border:1.5px solid #c8cad2;border-radius:5.5px;box-sizing:border-box;"></div>
<svg class="b" style="left:433px;top:752.3000000000001px;" width="26" height="26" viewBox="0 0 26 26"><circle cx="13" cy="13" r="10.6" fill="none" stroke="#a9abb6" stroke-width="2.8"/><path d="M13 7.6 V18.4 M7.6 13 H18.4" stroke="#a9abb6" stroke-width="2.8" stroke-linecap="round"/></svg>
<span class="t" style="left:466.00px;top:751.8px;font-size:22px;color:#1268c3;letter-spacing:0.374px;">vegan brownie recipe</span>
<svg class="b" style="left:687px;top:758.1px;" width="23" height="19" viewBox="0 0 23 19"><path d="M3.6 3.6 L9.5 9.5 L3.6 15.4 M12.6 3.6 L18.5 9.5 L12.6 15.4" fill="none" stroke="#a9abb6" stroke-width="2.9" stroke-linecap="round" stroke-linejoin="round"/></svg>
<div class="b" style="left:722.1px;top:752.2px;width:62.6px;height:31.3px;background:#cde7fb;border-radius:15.7px;"></div>
<span class="t" style="left:736.20px;top:753.0px;font-size:18.2px;color:#1268c3;-webkit-text-stroke:0.35px #1268c3;">#</span>
<span class="t" style="left:751.10px;top:753.0px;font-size:19px;color:#1268c3;letter-spacing:-1.200px;-webkit-text-stroke:0.35px #1268c3;">14</span>
<div class="b" style="left:966.9px;top:755.15px;width:24.1px;height:23.7px;background:#c4e4fd;border-radius:4.5px;"></div>
<span class="t" style="left:976.50px;top:752.4px;font-size:18.4px;color:#0b5fb3;font-weight:700;">I</span>
<span class="t" style="left:1147.50px;top:751.8px;font-size:22px;color:#191b23;letter-spacing:0.670px;">4,400</span>
<span class="t" style="left:1272.76px;top:751.8px;font-size:22px;color:#191b23;">38</span>
<div class="b" style="left:1310.7px;top:758.0px;width:17.6px;height:17.6px;background:#fcbf3c;border-radius:8.8px;"></div>
<span class="t" style="left:1395.06px;top:751.8px;font-size:22px;color:#191b23;">57</span>
<div class="b" style="left:1433.3px;top:758.0px;width:17.6px;height:17.6px;background:#fb8b3e;border-radius:8.8px;"></div>
<span class="t" style="left:1537.00px;top:751.8px;font-size:22px;color:#6c6e79;letter-spacing:-0.194px;">0.83</span>
<div class="b" style="left:354px;top:800.6px;width:1300px;height:1.3px;background:#e4e5eb;"></div>
<div class="b" style="left:385.4px;top:820.4px;width:24px;height:24px;background:#fff;border:1.5px solid #c8cad2;border-radius:5.5px;box-sizing:border-box;"></div>
<svg class="b" style="left:433px;top:820.7px;" width="26" height="26" viewBox="0 0 26 26"><circle cx="13" cy="13" r="10.6" fill="none" stroke="#a9abb6" stroke-width="2.8"/><path d="M13 7.6 V18.4 M7.6 13 H18.4" stroke="#a9abb6" stroke-width="2.8" stroke-linecap="round"/></svg>
<span class="t" style="left:466.00px;top:820.2px;font-size:22px;color:#1268c3;letter-spacing:0.388px;">vegan dessert recipes</span>
<svg class="b" style="left:694px;top:826.5px;" width="23" height="19" viewBox="0 0 23 19"><path d="M3.6 3.6 L9.5 9.5 L3.6 15.4 M12.6 3.6 L18.5 9.5 L12.6 15.4" fill="none" stroke="#a9abb6" stroke-width="2.9" stroke-linecap="round" stroke-linejoin="round"/></svg>
<div class="b" style="left:729.75px;top:820.6px;width:61.9px;height:31.3px;background:#cde7fb;border-radius:15.7px;"></div>
<span class="t" style="left:743.85px;top:821.4px;font-size:18.2px;color:#1268c3;-webkit-text-stroke:0.35px #1268c3;">#</span>
<span class="t" style="left:759.55px;top:821.4px;font-size:19px;color:#1268c3;letter-spacing:-1.200px;-webkit-text-stroke:0.35px #1268c3;">12</span>
<div class="b" style="left:966.9px;top:823.55px;width:24.1px;height:23.7px;background:#c4e4fd;border-radius:4.5px;"></div>
<span class="t" style="left:976.50px;top:820.8px;font-size:18.4px;color:#0b5fb3;font-weight:700;">I</span>
<span class="t" style="left:1147.50px;top:820.2px;font-size:22px;color:#191b23;letter-spacing:0.670px;">4,400</span>
<span class="t" style="left:1272.76px;top:820.2px;font-size:22px;color:#191b23;">34</span>
<div class="b" style="left:1310.7px;top:826.4px;width:17.6px;height:17.6px;background:#fcbf3c;border-radius:8.8px;"></div>
<span class="t" style="left:1395.06px;top:820.2px;font-size:22px;color:#191b23;">51</span>
<div class="b" style="left:1433.3px;top:826.4px;width:17.6px;height:17.6px;background:#fb8b3e;border-radius:8.8px;"></div>
<span class="t" style="left:1537.00px;top:820.2px;font-size:22px;color:#6c6e79;letter-spacing:-0.194px;">0.20</span>
<div class="b" style="left:354px;top:869.0px;width:1300px;height:1.3px;background:#e4e5eb;"></div>
<div class="b" style="left:385.4px;top:888.6px;width:24px;height:24px;background:#fff;border:1.5px solid #c8cad2;border-radius:5.5px;box-sizing:border-box;"></div>
<svg class="b" style="left:433px;top:888.9000000000001px;" width="26" height="26" viewBox="0 0 26 26"><circle cx="13" cy="13" r="10.6" fill="none" stroke="#a9abb6" stroke-width="2.8"/><path d="M13 7.6 V18.4 M7.6 13 H18.4" stroke="#a9abb6" stroke-width="2.8" stroke-linecap="round"/></svg>
<span class="t" style="left:466.00px;top:888.4px;font-size:22px;color:#1268c3;letter-spacing:0.476px;">vegan waffle recipe</span>
<svg class="b" style="left:668.5px;top:894.7px;" width="23" height="19" viewBox="0 0 23 19"><path d="M3.6 3.6 L9.5 9.5 L3.6 15.4 M12.6 3.6 L18.5 9.5 L12.6 15.4" fill="none" stroke="#a9abb6" stroke-width="2.9" stroke-linecap="round" stroke-linejoin="round"/></svg>
<div class="b" style="left:966.9px;top:891.75px;width:24.1px;height:23.7px;background:#c4e4fd;border-radius:4.5px;"></div>
<span class="t" style="left:976.50px;top:889.0px;font-size:18.4px;color:#0b5fb3;font-weight:700;">I</span>
<span class="t" style="left:1147.50px;top:888.4px;font-size:22px;color:#191b23;letter-spacing:0.670px;">4,400</span>
<span class="t" style="left:1272.76px;top:888.4px;font-size:22px;color:#191b23;">47</span>
<div class="b" style="left:1310.7px;top:894.6px;width:17.6px;height:17.6px;background:#fcbf3c;border-radius:8.8px;"></div>
<span class="t" style="left:1395.06px;top:888.4px;font-size:22px;color:#191b23;">50</span>
<div class="b" style="left:1433.3px;top:894.6px;width:17.6px;height:17.6px;background:#fb8b3e;border-radius:8.8px;"></div>
<span class="t" style="left:1537.00px;top:888.4px;font-size:22px;color:#6c6e79;letter-spacing:-0.194px;">0.81</span>
<div class="b" style="left:354px;top:936.6999999999999px;width:1300px;height:1.3px;background:#e4e5eb;"></div>
<div class="b" style="left:385.4px;top:956.8px;width:24px;height:24px;background:#fff;border:1.5px solid #c8cad2;border-radius:5.5px;box-sizing:border-box;"></div>
<svg class="b" style="left:433px;top:957.1px;" width="26" height="26" viewBox="0 0 26 26"><circle cx="13" cy="13" r="10.6" fill="none" stroke="#a9abb6" stroke-width="2.8"/><path d="M13 7.6 V18.4 M7.6 13 H18.4" stroke="#a9abb6" stroke-width="2.8" stroke-linecap="round"/></svg>
<span class="t" style="left:466.00px;top:956.6px;font-size:22px;color:#1268c3;letter-spacing:0.327px;">vegan pumpkin pie recipe</span>
<svg class="b" style="left:729px;top:962.9px;" width="23" height="19" viewBox="0 0 23 19"><path d="M3.6 3.6 L9.5 9.5 L3.6 15.4 M12.6 3.6 L18.5 9.5 L12.6 15.4" fill="none" stroke="#a9abb6" stroke-width="2.9" stroke-linecap="round" stroke-linejoin="round"/></svg>
<div class="b" style="left:966.9px;top:959.9499999999999px;width:24.1px;height:23.7px;background:#c4e4fd;border-radius:4.5px;"></div>
<span class="t" style="left:976.50px;top:957.1px;font-size:18.4px;color:#0b5fb3;font-weight:700;">I</span>
<span class="t" style="left:1148.20px;top:956.6px;font-size:22px;color:#191b23;letter-spacing:0.495px;">3,600</span>
<span class="t" style="left:1272.76px;top:956.6px;font-size:22px;color:#191b23;">48</span>
<div class="b" style="left:1310.7px;top:962.8px;width:17.6px;height:17.6px;background:#fcbf3c;border-radius:8.8px;"></div>
<span class="t" style="left:1395.06px;top:956.6px;font-size:22px;color:#191b23;">51</span>
<div class="b" style="left:1433.3px;top:962.8px;width:17.6px;height:17.6px;background:#fb8b3e;border-radius:8.8px;"></div>
<span class="t" style="left:1537.00px;top:956.6px;font-size:22px;color:#6c6e79;letter-spacing:-0.194px;">0.00</span>
<div class="b" style="left:354px;top:1004.1999999999999px;width:1300px;height:1.3px;background:#e4e5eb;"></div>
<div class="b" style="left:385.4px;top:1024.4px;width:24px;height:24px;background:#fff;border:1.5px solid #c8cad2;border-radius:5.5px;box-sizing:border-box;"></div>
<svg class="b" style="left:433px;top:1024.7px;" width="26" height="26" viewBox="0 0 26 26"><circle cx="13" cy="13" r="10.6" fill="none" stroke="#a9abb6" stroke-width="2.8"/><path d="M13 7.6 V18.4 M7.6 13 H18.4" stroke="#a9abb6" stroke-width="2.8" stroke-linecap="round"/></svg>
<span class="t" style="left:466.00px;top:1024.2px;font-size:22px;color:#1268c3;letter-spacing:0.267px;">vegan ramen recipe</span>
<svg class="b" style="left:669.75px;top:1030.5px;" width="23" height="19" viewBox="0 0 23 19"><path d="M3.6 3.6 L9.5 9.5 L3.6 15.4 M12.6 3.6 L18.5 9.5 L12.6 15.4" fill="none" stroke="#a9abb6" stroke-width="2.9" stroke-linecap="round" stroke-linejoin="round"/></svg>
<div class="b" style="left:966.9px;top:1027.55px;width:24.1px;height:23.7px;background:#c4e4fd;border-radius:4.5px;"></div>
<span class="t" style="left:976.50px;top:1024.8px;font-size:18.4px;color:#0b5fb3;font-weight:700;">I</span>
<span class="t" style="left:1147.20px;top:1024.2px;font-size:22px;color:#191b23;letter-spacing:0.745px;">2,900</span>
<span class="t" style="left:1272.76px;top:1024.2px;font-size:22px;color:#191b23;">49</span>
<div class="b" style="left:1310.7px;top:1030.4px;width:17.6px;height:17.6px;background:#fcbf3c;border-radius:8.8px;"></div>
<span class="t" style="left:1395.06px;top:1024.2px;font-size:22px;color:#191b23;">51</span>
<div class="b" style="left:1433.3px;top:1030.4px;width:17.6px;height:17.6px;background:#fb8b3e;border-radius:8.8px;"></div>
<span class="t" style="left:1537.00px;top:1024.2px;font-size:22px;color:#6c6e79;letter-spacing:-0.194px;">0.36</span>
<div class="b" style="left:354px;top:1071.1000000000001px;width:1300px;height:1.3px;background:#e4e5eb;"></div>
<div class="b" style="left:385.4px;top:1091.4px;width:24px;height:24px;background:#fff;border:1.5px solid #c8cad2;border-radius:5.5px;box-sizing:border-box;"></div>
<svg class="b" style="left:433px;top:1091.7px;" width="26" height="26" viewBox="0 0 26 26"><circle cx="13" cy="13" r="10.6" fill="none" stroke="#a9abb6" stroke-width="2.8"/><path d="M13 7.6 V18.4 M7.6 13 H18.4" stroke="#a9abb6" stroke-width="2.8" stroke-linecap="round"/></svg>
<span class="t" style="left:466.00px;top:1091.2px;font-size:22px;color:#1268c3;letter-spacing:0.323px;">vegan cheese recipe</span>
<svg class="b" style="left:679.6px;top:1097.5px;" width="23" height="19" viewBox="0 0 23 19"><path d="M3.6 3.6 L9.5 9.5 L3.6 15.4 M12.6 3.6 L18.5 9.5 L12.6 15.4" fill="none" stroke="#a9abb6" stroke-width="2.9" stroke-linecap="round" stroke-linejoin="round"/></svg>
<div class="b" style="left:715px;top:1091.6px;width:61.6px;height:31.3px;background:#cde7fb;border-radius:15.7px;"></div>
<span class="t" style="left:729.10px;top:1092.4px;font-size:18.2px;color:#1268c3;-webkit-text-stroke:0.35px #1268c3;">#</span>
<span class="t" style="left:743.90px;top:1092.4px;font-size:19px;color:#1268c3;letter-spacing:-1.200px;-webkit-text-stroke:0.35px #1268c3;">16</span>
<div class="b" style="left:966.9px;top:1094.55px;width:24.1px;height:23.7px;background:#c4e4fd;border-radius:4.5px;"></div>
<span class="t" style="left:976.50px;top:1091.8px;font-size:18.4px;color:#0b5fb3;font-weight:700;">I</span>
<span class="t" style="left:1146.70px;top:1091.2px;font-size:22px;color:#191b23;letter-spacing:0.870px;">2,400</span>
<span class="t" style="left:1272.76px;top:1091.2px;font-size:22px;color:#191b23;">41</span>
<div class="b" style="left:1310.7px;top:1097.4px;width:17.6px;height:17.6px;background:#fcbf3c;border-radius:8.8px;"></div>
<span class="t" style="left:1395.06px;top:1091.2px;font-size:22px;color:#191b23;">57</span>
<div class="b" style="left:1433.3px;top:1097.4px;width:17.6px;height:17.6px;background:#fb8b3e;border-radius:8.8px;"></div>
<span class="t" style="left:1537.00px;top:1091.2px;font-size:22px;color:#6c6e79;letter-spacing:-0.194px;">0.91</span>
<div class="b" style="left:354px;top:1139.4px;width:1300px;height:1.3px;background:#e4e5eb;"></div>
<div class="b" style="left:385.4px;top:1160.4px;width:24px;height:24px;background:#fff;border:1.5px solid #c8cad2;border-radius:5.5px;box-sizing:border-box;"></div>
<svg class="b" style="left:433px;top:1160.7px;" width="26" height="26" viewBox="0 0 26 26"><circle cx="13" cy="13" r="10.6" fill="none" stroke="#a9abb6" stroke-width="2.8"/><path d="M13 7.6 V18.4 M7.6 13 H18.4" stroke="#a9abb6" stroke-width="2.8" stroke-linecap="round"/></svg>
<span class="t" style="left:466.00px;top:1160.2px;font-size:22px;color:#1268c3;letter-spacing:0.328px;">vegan keto recipes</span>
<svg class="b" style="left:661.25px;top:1166.5px;" width="23" height="19" viewBox="0 0 23 19"><path d="M3.6 3.6 L9.5 9.5 L3.6 15.4 M12.6 3.6 L18.5 9.5 L12.6 15.4" fill="none" stroke="#a9abb6" stroke-width="2.9" stroke-linecap="round" stroke-linejoin="round"/></svg>
<div class="b" style="left:966.9px;top:1163.55px;width:24.1px;height:23.7px;background:#c4e4fd;border-radius:4.5px;"></div>
<span class="t" style="left:976.50px;top:1160.8px;font-size:18.4px;color:#0b5fb3;font-weight:700;">I</span>
<span class="t" style="left:1146.70px;top:1160.2px;font-size:22px;color:#191b23;letter-spacing:0.870px;">2,400</span>
<span class="t" style="left:1272.76px;top:1160.2px;font-size:22px;color:#191b23;">48</span>
<div class="b" style="left:1310.7px;top:1166.4px;width:17.6px;height:17.6px;background:#fcbf3c;border-radius:8.8px;"></div>
<span class="t" style="left:1395.06px;top:1160.2px;font-size:22px;color:#191b23;">51</span>
<div class="b" style="left:1433.3px;top:1166.4px;width:17.6px;height:17.6px;background:#fb8b3e;border-radius:8.8px;"></div>
<span class="t" style="left:1537.00px;top:1160.2px;font-size:22px;color:#6c6e79;letter-spacing:-0.194px;">0.59</span>
<div class="b" style="left:354.2px;top:393.1px;width:1162.8px;height:746.9px;box-sizing:border-box;border-style:solid;border-color:#b67ffb;border-width:7.5px 7.1px 8.1px 8.1px;"></div>
<div class="b" style="left:1520px;top:0px;width:80px;height:1208px;background:linear-gradient(to right, rgba(255,255,255,0) 0%, rgba(255,255,255,0) 8.8%, rgba(255,255,255,0.12) 25.0%, rgba(255,255,255,0.32) 37.5%, rgba(255,255,255,0.52) 45.0%, rgba(255,255,255,0.7) 52.5%, rgba(255,255,255,0.83) 60.0%, rgba(255,255,255,0.93) 68.8%, rgba(255,255,255,1) 78.8%, rgba(255,255,255,1) 100.0%);"></div>
<div class="b" style="left:0px;top:1140px;width:1600px;height:68px;background:linear-gradient(to bottom, rgba(255,255,255,0) 0%, rgba(255,255,255,0) 5.9%, rgba(255,255,255,0.15) 22.1%, rgba(255,255,255,0.4) 38.2%, rgba(255,255,255,0.6) 51.5%, rgba(255,255,255,0.85) 63.2%, rgba(255,255,255,1) 73.5%, rgba(255,255,255,1) 100.0%);"></div>
</div></body></html>
